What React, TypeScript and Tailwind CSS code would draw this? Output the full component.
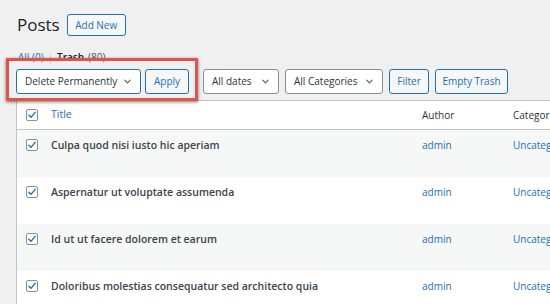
import { ChevronDown } from "lucide-react";

const rows = [
  "Culpa quod nisi iusto hic aperiam",
  "Aspernatur ut voluptate assumenda",
  "Id ut ut facere dolorem et earum",
  "Doloribus molestias consequatur sed architecto quia",
];

function Check() {
  return (
    <span className="flex h-[12px] w-[12px] items-center justify-center rounded-[2px] border border-[#8c8f94] bg-white">
      <svg viewBox="0 0 12 12" className="h-[10px] w-[10px]">
        <path d="M2.2 6.2 L4.8 8.8 L9.8 2.8" fill="none" stroke="#2271b1" strokeWidth="1.7" strokeLinecap="round" strokeLinejoin="round" />
      </svg>
    </span>
  );
}

function Select({ label, width, focused }: { label: string; width: string; focused?: boolean }) {
  return (
    <div
      className={`flex h-[25px] ${width} items-center justify-between rounded-[3px] border bg-white pl-[8px] pr-[7px] text-[10px] text-[#2c3338] ${
        focused ? "border-[#2271b1]" : "border-[#8c8f94]"
      }`}
    >
      <span>{label}</span>
      <ChevronDown className="h-[11px] w-[11px] text-[#50575e]" strokeWidth={2.2} />
    </div>
  );
}

function Button({ label, width }: { label: string; width: string }) {
  return (
    <button className={`flex h-[25px] ${width} items-center justify-center rounded-[3px] border border-[#2271b1] bg-[#f6f7f7] text-[10px] text-[#2271b1]`}>
      {label}
    </button>
  );
}

export default function App() {
  return (
    <div className="h-[304px] w-[550px] overflow-hidden bg-[#f0f0f1] font-['Open_Sans',sans-serif]">
      {/* Heading */}
      <div className="flex items-center gap-[7px] pl-[17px] pt-[14px]">
        <h1 className="text-[17px] leading-[22px] text-[#1d2327]">Posts</h1>
        <button className="flex h-[22px] w-[59px] items-center justify-center rounded-[3px] border border-[#2271b1] bg-[#f6f7f7] text-[10px] text-[#2271b1]">
          Add New
        </button>
      </div>

      {/* Status links */}
      <div className="mt-[14px] flex items-center gap-[4px] pl-[18px] text-[10px] leading-[14px] text-[#50575e]">
        <span className="text-[#2271b1]">All (0)</span>
        <span className="text-[#c3c4c7]">|</span>
        <span className="font-semibold text-[#1d2327]">Trash</span>
        <span>(80)</span>
      </div>

      {/* Bulk actions */}
      <div className="relative mt-[5px] flex items-center pl-[16px]">
        <Select label="Delete Permanently" width="w-[125px]" focused />
        <div className="ml-[4px]">
          <Button label="Apply" width="w-[44px]" />
        </div>
        <div className="ml-[14px]">
          <Select label="All dates" width="w-[76px]" />
        </div>
        <div className="ml-[6px]">
          <Select label="All Categories" width="w-[98px]" />
        </div>
        <div className="ml-[6px]">
          <Button label="Filter" width="w-[40px]" />
        </div>
        <div className="ml-[6px]">
          <Button label="Empty Trash" width="w-[73px]" />
        </div>
        <div className="absolute left-[6px] top-[-11px] h-[43px] w-[192px] border-[3px] border-[#e2544a] shadow-[0_1px_3px_rgba(0,0,0,0.55)]" />
      </div>

      {/* Table */}
      <div className="ml-[16px] mt-[6px] border-l border-t border-[#c3c4c7] bg-white text-[10px]">
        <div className="grid h-[29px] grid-cols-[34px_371px_91px_1fr] items-center border-b border-[#c3c4c7]">
          <div className="pl-[9px]">
            <Check />
          </div>
          <span className="text-[10.5px] text-[#2271b1]">Title</span>
          <span className="text-[#2c3338]">Author</span>
          <span className="whitespace-nowrap text-[#2c3338]">Categories</span>
        </div>
        {rows.map((title, i) => (
          <div
            key={title}
            className={`grid h-[47px] grid-cols-[34px_371px_91px_1fr] items-start pt-[8px] leading-[14px] ${
              i % 2 === 0 ? "bg-[#f6f7f7]" : "bg-white"
            }`}
          >
            <div className="pl-[9px] pt-[1px]">
              <Check />
            </div>
            <span className="text-[10.5px] font-semibold text-[#3c434a]">{title}</span>
            <span className="text-[#2271b1]">admin</span>
            <span className="whitespace-nowrap text-[#2271b1]">Uncategorized</span>
          </div>
        ))}
      </div>
    </div>
  );
}
